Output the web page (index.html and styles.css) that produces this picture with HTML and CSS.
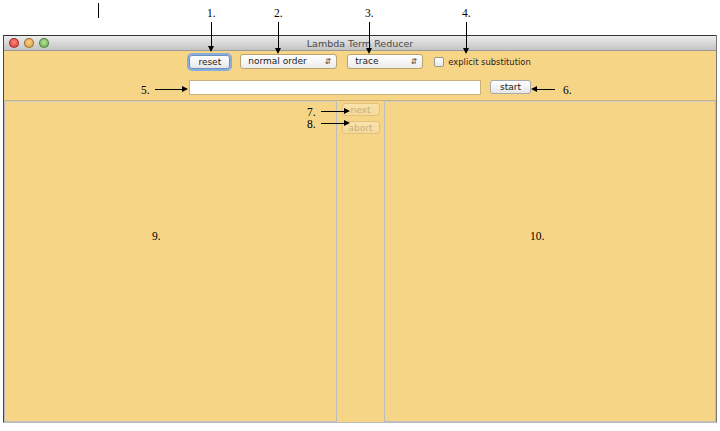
FILE: index.html
```html
<!DOCTYPE html>
<html lang="en">
<head>
  <meta charset="UTF-8">
  <title>Lambda Term Reducer</title>
  <link rel="stylesheet" href="styles.css">
</head>
<body>

  <div class="window">
    <div class="title-bar">
      <div class="lights">
        <span class="light red"></span>
        <span class="light yellow"></span>
        <span class="light green"></span>
      </div>
      <div class="title">Lambda Term Reducer</div>
    </div>

    <div class="toolbar">
      <button class="btn btn-focus">reset</button>
      <div class="select select-order">normal order<span class="arrows">&#8693;</span></div>
      <div class="select select-mode">trace<span class="arrows">&#8693;</span></div>
      <label class="check"><span class="box"></span>explicit substitution</label>
    </div>

    <div class="input-row">
      <div class="term-input"></div>
      <button class="btn">start</button>
    </div>

    <div class="panes">
      <div class="pane pane-left"></div>
      <div class="step-col">
        <button class="btn btn-off">next</button>
        <button class="btn btn-off">abort</button>
      </div>
      <div class="pane pane-right"></div>
    </div>
  </div>

  <!-- Подписи -->
  <div class="mark"></div>

  <div class="note" style="left:207px;top:7px">1.</div>
  <div class="vline" style="left:211px;top:22px;height:28px"></div>
  <div class="note" style="left:274px;top:7px">2.</div>
  <div class="vline" style="left:278px;top:22px;height:30px"></div>
  <div class="note" style="left:365px;top:7px">3.</div>
  <div class="vline" style="left:369px;top:22px;height:30px"></div>
  <div class="note" style="left:462px;top:7px">4.</div>
  <div class="vline" style="left:466px;top:22px;height:30px"></div>

  <div class="note" style="left:141px;top:84px">5.</div>
  <div class="hline right" style="left:155px;top:89px;width:31px"></div>
  <div class="note" style="left:563px;top:84px">6.</div>
  <div class="hline left" style="left:533px;top:89px;width:22px"></div>

  <div class="note" style="left:307px;top:106px">7.</div>
  <div class="hline right" style="left:321px;top:111px;width:27px"></div>
  <div class="note" style="left:307px;top:118px">8.</div>
  <div class="hline right" style="left:321px;top:123px;width:27px"></div>

  <div class="note" style="left:152px;top:230px">9.</div>
  <div class="note" style="left:530px;top:230px">10.</div>

</body>
</html>
```

FILE: styles.css
```css
body {
  margin: 0;
  background-color: #fff;
  font-family: "DejaVu Sans", sans-serif;
  width: 720px;
  height: 431px;
  position: relative;
  overflow: hidden;
}

.window {
  margin: 35px 0 0 3px;
  width: 714px;
  height: 388px;
  background-color: #f7d587;
  border-left: 1px solid #444;
  border-right: 1px solid #777;
  border-bottom: 1px solid #bdbdbd;
  box-sizing: border-box;
  display: flex;
  flex-direction: column;
}

.title-bar {
  height: 15px;
  background: linear-gradient(#ececec, #c4c4c4);
  border-top: 1px solid #333;
  border-bottom: 1px solid #9a9a9a;
  position: relative;
  display: flex;
  align-items: center;
}

.lights {
  display: flex;
  gap: 5px;
  padding-left: 5px;
}

.light {
  width: 8px;
  height: 8px;
  border-radius: 50%;
  border: 1px solid rgba(0, 0, 0, 0.35);
}

.light.red { background: radial-gradient(circle at 50% 40%, #ff8a80, #d8312a); }
.light.yellow { background: radial-gradient(circle at 50% 40%, #ffd48a, #d9952a); }
.light.green { background: radial-gradient(circle at 50% 40%, #b6e59a, #5ea843); }

.title {
  position: absolute;
  left: 0;
  right: 0;
  text-align: center;
  font-size: 9.5px;
  color: #4a4a4a;
}

.toolbar {
  display: flex;
  justify-content: center;
  align-items: center;
  gap: 10px;
  margin-top: 3px;
  height: 15px;
}

.btn {
  font-family: "DejaVu Sans", sans-serif;
  font-size: 9px;
  color: #222;
  height: 14px;
  padding: 0;
  width: 41px;
  border: 1px solid #a9a9a9;
  border-radius: 3px;
  background: linear-gradient(#ffffff, #e6e6e6);
  line-height: 12px;
}

.btn-focus {
  box-shadow: 0 0 0 2px #86aedd;
  border-color: #6f8fbf;
}

.btn-off {
  width: 38px;
  height: 13px;
  color: #c6b183;
  border-color: #e0c27e;
  background: linear-gradient(#fae3ab, #f4d999);
}

.select {
  position: relative;
  height: 13px;
  font-size: 9px;
  line-height: 13px;
  color: #222;
  padding-left: 7px;
  border: 1px solid #b8a373;
  border-radius: 3px;
  background: linear-gradient(#ffffff, #ececec);
  box-sizing: content-box;
}

.select-order { width: 88px; }
.select-mode { width: 67px; }

.arrows {
  position: absolute;
  right: 5px;
  top: 0;
  font-size: 8px;
  color: #444;
}

.check {
  display: flex;
  align-items: center;
  gap: 4px;
  font-size: 8.4px;
  color: #222;
  margin-left: 1px;
}

.box {
  width: 8px;
  height: 8px;
  border: 1px solid #9a9a9a;
  border-radius: 2px;
  background: linear-gradient(#fff, #e8e8e8);
}

.input-row {
  display: flex;
  justify-content: center;
  gap: 9px;
  margin-top: 11px;
}

.term-input {
  width: 290px;
  height: 13px;
  background-color: #fff;
  border: 1px solid #c9b27a;
}

.panes {
  flex: 1;
  display: flex;
  margin-top: 5px;
  border-top: 1px solid #c8b078;
}

.pane {
  border: 1px solid #bdbdbd;
  border-top-color: #cfcfcf;
  box-sizing: border-box;
  height: 321px;
}

.pane-left { width: 333px; }
.pane-right { flex: 1; }

.step-col {
  width: 47px;
  display: flex;
  flex-direction: column;
  align-items: center;
  gap: 5px;
  padding-top: 2px;
}

/* annotations */
.mark {
  position: absolute;
  left: 98px;
  top: 3px;
  width: 1px;
  height: 15px;
  background: #000;
}

.note {
  position: absolute;
  font-family: "Liberation Serif", serif;
  font-size: 11.5px;
  color: #000;
}

.vline {
  position: absolute;
  width: 1px;
  background: #000;
}

.vline::after {
  content: "";
  position: absolute;
  left: -3px;
  bottom: -2px;
  border-left: 3.5px solid transparent;
  border-right: 3.5px solid transparent;
  border-top: 6px solid #000;
}

.hline {
  position: absolute;
  height: 1px;
  background: #000;
}

.hline.right::after {
  content: "";
  position: absolute;
  right: -2px;
  top: -3px;
  border-top: 3.5px solid transparent;
  border-bottom: 3.5px solid transparent;
  border-left: 6px solid #000;
}

.hline.left::after {
  content: "";
  position: absolute;
  left: -2px;
  top: -3px;
  border-top: 3.5px solid transparent;
  border-bottom: 3.5px solid transparent;
  border-right: 6px solid #000;
}
```
